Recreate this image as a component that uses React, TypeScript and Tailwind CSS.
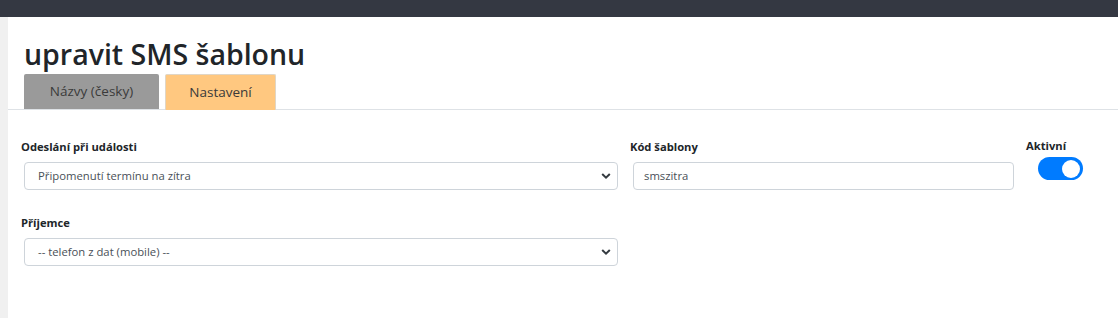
import React from 'react';

const font = { fontFamily: '"Open Sans", "Noto Sans", sans-serif' };

const Chevron: React.FC = () => (
  <svg width="10" height="7" viewBox="0 0 10 7" className="absolute right-[6px] top-1/2 -translate-y-1/2">
    <path d="M1.2 1.5 L5 5.2 L8.8 1.5" stroke="#343a40" strokeWidth="2" fill="none" />
  </svg>
);

const SelectBox: React.FC<{ value: string }> = ({ value }) => (
  <div className="relative h-[28px] w-[594px] rounded-[4px] border border-[#ced4da] bg-white pl-[13px] text-[11.3px] leading-[26px] text-[#495057]">
    {value}
    <Chevron />
  </div>
);

export default function App() {
  return (
    <div className="flex min-h-[318px] w-full flex-col bg-white" style={font}>
      <div className="h-[17px] shrink-0 bg-[#343842]" />
      <div className="flex flex-1">
        <div className="w-[8px] shrink-0 bg-[#f0f0f0]" />
        <div className="flex-1 pb-[40px]">
          <h1 className="pl-[16px] pt-[18px] text-[28.5px] font-semibold leading-[38px] text-[#212529]">
            upravit SMS šablonu
          </h1>
          <div className="mt-[1px] flex items-end gap-[6px] border-b border-[#dee2e6] pl-[16px]">
            <div className="flex h-[35px] w-[135px] items-center justify-center rounded-t-[2px] bg-[#9a9a9a] text-[13.5px] text-[#3a3a3a]">
              Názvy (česky)
            </div>
            <div className="-mb-px flex h-[36px] w-[111px] items-center justify-center rounded-t-[2px] border border-b-0 border-[#e0d6c6] bg-[#ffc880] text-[13.5px] text-[#3a3a3a]">
              Nastavení
            </div>
          </div>

          <div className="flex pl-[13px] pt-[28px]">
            <div className="flex flex-col">
              <label className="text-[11.2px] font-bold leading-[17px] text-[#212529]">Odeslání při události</label>
              <div className="mt-[7px] pl-[3px]">
                <SelectBox value="Připomenutí termínu na zítra" />
              </div>
              <label className="mt-[24px] text-[11.2px] font-bold leading-[17px] text-[#212529]">Příjemce</label>
              <div className="mt-[7px] pl-[3px]">
                <SelectBox value="-- telefon z dat (mobile) --" />
              </div>
            </div>
            <div className="ml-[12px] flex flex-col">
              <label className="text-[11.2px] font-bold leading-[17px] text-[#212529]">Kód šablony</label>
              <div className="mt-[7px] pl-[3px]">
                <div className="h-[28px] w-[381px] rounded-[4px] border border-[#ced4da] bg-white pl-[10px] text-[11.3px] leading-[26px] text-[#495057]">
                  smszitra
                </div>
              </div>
            </div>
            <div className="ml-[13px] flex flex-col">
              <label className="-mt-[1px] -ml-[1px] text-[11.2px] font-bold leading-[17px] text-[#212529]">Aktivní</label>
              <div className="ml-[11px] mt-[3px] flex h-[23px] w-[45px] items-center justify-end rounded-full bg-[#007bff] pr-[3px]">
                <div className="h-[18px] w-[18px] rounded-full bg-white" />
              </div>
            </div>
          </div>
        </div>
      </div>
    </div>
  );
}
